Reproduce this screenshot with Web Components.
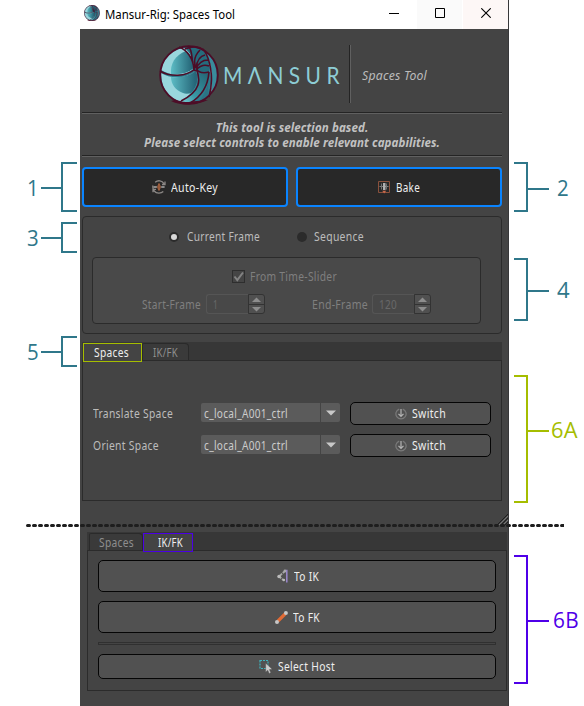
<!DOCTYPE html>
<html lang="en">
<head>
<meta charset="utf-8">
<title>Mansur-Rig: Spaces Tool</title>
<style>
html,body{margin:0;background:#fff}
body{width:584px;height:706px;overflow:hidden;font:12px "Noto Sans","Open Sans",sans-serif}
</style>
</head>
<body>
<spaces-page></spaces-page>
<script>
const define = (name, html, setup) => customElements.define(name, class extends HTMLElement {
  connectedCallback() {
    if (this.shadowRoot) return;
    const root = this.attachShadow({mode: 'open'});
    const t = document.createElement('template');
    t.innerHTML = html;
    root.append(t.content.cloneNode(true));
    if (setup) setup(this, root);
  }
});

/* Label condensed or expanded to the width in "w". */
define('fit-label', `<style>:host{display:block;flex:none;white-space:nowrap;line-height:16px;height:16px;letter-spacing:.35px}span{display:inline-block;transform-origin:0 50%}</style><span><slot></slot></span>`,
(el, root) => {
  const s = root.querySelector('span'), w = +el.getAttribute('w');
  el.style.width = w + 'px';
  s.style.transform = 'scaleX(' + w / s.getBoundingClientRect().width + ')';
});

/* Numbered bracket beside the window. */
define('call-out', `<style>
:host{display:flex;align-items:flex-start;color:var(--c,#2f778a);font-family:"Open Sans","Noto Sans",sans-serif;font-size:22px;height:var(--h)}
:host([right]){flex-direction:row-reverse}
.n{display:flex;flex:1;justify-content:flex-end;padding-right:2px;margin-top:calc(var(--m) - 15px)}
:host([right]) .n{justify-content:flex-start;padding:0 0 0 var(--gap,8px);margin-top:calc(var(--m) - 16px)}
.n ::slotted(*){line-height:28px!important;height:28px!important}
.l{width:20px;height:2px;background:currentColor;margin-top:calc(var(--m) - 1px)}
:host([right]) .l{width:21px}
.b{box-sizing:border-box;width:16px;height:100%;border:2px solid;border-right:0}
:host([right]) .b{width:14px;border:2px solid;border-left:0}
</style><div class="n"><slot></slot></div><div class="l"></div><div class="b"></div>`);

const icons = {
  key: `<svg width="14" height="14" viewBox="0 0 14 14" fill="none" stroke="#8c8886" stroke-width="1.3"><path d="M3.2 2.2C6-.1 10 .4 12 3.6M1 5.5C.1 9.8 3.1 13.3 7 13.2c1.7 0 3.1-.5 4.3-1.6M13 1.6v2.9H10M1 12.2V9.4h3"/><path d="M1.5 7h3.4M9.2 7h3.4" stroke="#aaa"/><path d="M7 3.5v7" stroke="#bd6c42" stroke-width="1.6"/><path d="M5.7 5.6v2.8M8.3 5.6v2.8" stroke="#87543c"/></svg>`,
  bake: `<svg width="13" height="14" viewBox="0 0 13 14" fill="none"><path d="M.5 1.5h11v11H.5z" stroke="#8b513c"/><path d="M1.5 6.5h9" stroke="#808080"/><path d="M3.5 3.5v6M8.5 3.5v6" stroke="#707070"/><path d="M5 3h2.5v7H5z" fill="#b0b0b0"/><path d="M4.2 10.8h4L6.2 13.6z" fill="#c8694b"/></svg>`,
  sw: `<svg width="12" height="12" viewBox="0 0 12 12" fill="none"><path d="M4.2 1.1A5.1 5.1 0 1 0 7.8 1.1" stroke="#7a7a7a" stroke-width="1.2"/><path d="M6 1v7M3.5 5.9 6 8.4l2.5-2.5" stroke="#b5b5b5" stroke-width="1.2"/></svg>`,
  ik: `<svg width="12" height="14" viewBox="0 0 12 14" fill="none"><path d="M8 2 2 7.5 7 11.5" stroke="#a8a8a8" stroke-width="1.8" stroke-dasharray="3 1"/><circle cx="2" cy="7.5" r="1.7" fill="#bbb"/><circle cx="8" cy="2" r="1.4" fill="#aaa"/><circle cx="6.8" cy="11" r="1.3" fill="#bbb"/><path d="M9.8.8v12.6" stroke="#9b88cc" stroke-width="1.5"/></svg>`,
  fk: `<svg width="13" height="13" viewBox="0 0 13 13"><path d="m3 10 7-7" stroke="#e06b36" stroke-width="3.2"/><circle cx="2" cy="10.9" r="2" fill="#c7c7c7"/><circle cx="10.9" cy="2" r="2" fill="#c7c7c7"/></svg>`,
  host: `<svg width="14" height="14" viewBox="0 0 14 14"><path d="M1 .5h8v8H1z" fill="none" stroke="#3fb3bd" stroke-width="1.2" stroke-dasharray="2 1"/><path d="M6.7 3.2v8.7L8.8 10.2l1.4 3.3 1.6-.7-1.4-3.2 2.8-.4z" fill="#ccc" stroke="#515151" stroke-width=".4"/></svg>`
};

define('tool-button', `<style>
:host{box-sizing:border-box;display:flex;align-items:center;justify-content:center;gap:5px;background:#515151;border:1px solid #050505;border-radius:5px;color:#eee}
:host([big]){background:#282828;border:2px solid #0a84ff;border-radius:4px;height:40px;flex:1}
i{display:flex;flex:none}::slotted(*){position:relative;top:1px}
</style><i></i><slot></slot>`, (el, root) => root.querySelector('i').innerHTML = icons[el.getAttribute('icon')]);

define('radio-mark', `<style>:host{display:block;box-sizing:border-box;flex:none;width:10px;height:10px;border-radius:50%;background:#2b2b2b;margin-top:-1px}:host([on]){background:#d8d8d8;border:2px solid #2b2b2b}</style>`);

define('check-mark', `<style>:host{display:block;flex:none;box-sizing:border-box;width:13px;height:13px;border:1px solid #2e2e2e;background:#454545;margin-top:-1px}svg{display:block}</style>
<svg width="11" height="11"><path d="M1.5 5.5 4.3 9 10 1.5" fill="none" stroke="#838383" stroke-width="2"/></svg>`);

define('spin-box', `<style>
:host{display:flex;box-sizing:border-box;flex:none;width:59px;height:20px;border-radius:3px;color:#696969}
.v{box-sizing:border-box;width:42px;border:1px solid #555;border-right:0;border-radius:3px 0 0 3px;padding:2px 0 0 6px;background:#484848}
.s{box-sizing:border-box;width:17px;border:1px solid #333;border-radius:0 3px 3px 0;display:grid;grid-template-rows:1fr 1fr;background:#505050}
.s div{display:flex;align-items:center;justify-content:center}.s div+div{border-top:1px solid #333}
svg{display:block}
</style><div class="v"><slot></slot></div><div class="s"><div><svg width="9" height="5"><path d="m0 5 4.5-4.5L9 5z" fill="#8e8e8e"/></svg></div><div><svg width="9" height="5"><path d="m0 0 4.5 4.5L9 0z" fill="#8e8e8e"/></svg></div></div>`);

define('combo-box', `<style>
:host{display:flex;box-sizing:border-box;width:139px;height:19px;color:#ccc}
.v{flex:1;background:#5b5b5b;border-radius:2px 0 0 2px;border-right:1px solid #444;padding:3px 0 0 3px}
.a{width:19px;background:#5b5b5b;display:flex;align-items:center;justify-content:center;border-radius:0 2px 2px 0}
</style><div class="v"><slot></slot></div><div class="a"><svg width="10" height="6"><path d="M0 .5h10L5 5.5z" fill="#c8c8c8"/></svg></div>`);

define('space-row', `<style>
:host{display:grid;grid-template-columns:108px 139px 141px;height:23px;align-items:center;color:#bcbcbc}
combo-box{margin-top:-2px}tool-button{height:23px;margin-left:10px;width:141px}
tool-button fit-label{top:0}
</style><slot></slot><combo-box><fit-label w="84">c_local_A001_ctrl</fit-label></combo-box><tool-button icon="sw"><fit-label w="34">Switch</fit-label></tool-button>`);

/* Tab strip with its framed pane. */
define('tab-pane', `<style>
:host{display:block;box-sizing:border-box;width:420px}
.bar{display:flex;box-sizing:border-box;height:18px;background:#373737}
.pane{box-sizing:border-box;border:1px solid #2b2b2b;height:var(--pane)}
</style><div class="bar"><slot name="tab"></slot></div><div class="pane"><slot></slot></div>`);
define('tab-item', `<style>
:host{box-sizing:border-box;display:flex;justify-content:center;height:17px;margin-top:1px;padding-top:1px;color:#8e8e8e;border:1px solid #2a2a2a;border-bottom:0;border-radius:2px 4px 0 0;background:#3a3a3a}
:host([active]){z-index:1;position:relative;height:19px;background:#444;color:#eee;border:1px solid var(--mark);border-radius:0}
</style><slot></slot>`);

/* Shell emblem; scales to the given size. */
define('shell-logo', `<style>:host{display:block;flex:none}svg{display:block}</style>
<svg viewBox="0 0 60 60">
<defs><linearGradient id="a" x1="0" x2="1"><stop stop-color="#5cbcc5"/><stop offset=".9" stop-color="#266779"/></linearGradient>
<linearGradient id="b" x1="0" y1="1" x2="1" y2="0"><stop stop-color="#7fd0d6"/><stop offset=".35" stop-color="#3998a6"/><stop offset="1" stop-color="#22606f"/></linearGradient></defs>
<circle cx="30" cy="30" r="28.7" fill="#2f7d8e"/>
<path d="M2 25C4 13 13 4 25 3c6 3 9 11 10 20-7 8-22 9-33 2Z" fill="#99d6dd"/>
<path d="M2 28c9 6 25 6 35-2 4 8 2 20-14 31C10 54 2 44 2 28Z" fill="#99d6dd"/>
<path d="M27 6C16 10 11 19 12 29c9 1 17-1 23-6-1-7-3-13-8-17Z" fill="url(#a)"/>
<path d="M12 32c10 1 18-1 25-6 3 7 2 15-4 22-4 1-7 1-9 0C16 45 12 39 12 32Z" fill="url(#a)"/>
<path d="M25 2C37 0 47 4 50 18v9c-5 1-9 0-13-3-2-9-5-17-12-22Z" fill="#256c7d"/>
<path d="M38 26c4 3 8 3 12 1 0 13-7 25-19 31-4 0-7-1-9-2 14-9 18-17 16-30Z" fill="url(#b)"/>
<path d="M46 6c12 9 17 32 4 46 4-16 3-32-4-46Z" fill="#3a8b9c"/>
<path d="M48 10c5 10 6 25 4 38 0-10 1-23-4-38Z" fill="#c6edf0"/>
<path d="M50 28c0 11-3 20-10 28 5-1 8-3 10-5-2-8 0-15 0-23Z" fill="#2b7385"/>
<circle cx="30" cy="30" r="28.8" fill="none" stroke="#4d0d27" stroke-width="1.9"/>
<path d="M12 56c6-2 9 1 15 1s15-2 22-2c-8 4-27 7-37 1Z" fill="#4d0d27"/>
<g fill="none" stroke="#4d0d27" stroke-width="1.6"><path d="M1 26c10 6 26 6 35-2M20 2c8 3 14 11 15 22M29 1c6 5 2 14 7 23M26 4c7-3 14-3 20 2M37 23c-3-7-1-13 4-18M37 23c1-7 4-12 9-13M37 24c2-5 6-9 12-9M38 24c3-3 7-5 12-3M37 24c3 4 9 4 13 3M37 23c5 12 5 23-15 33M50 27c-1 14-7 24-19 31M44 4c8 10 11 31 6 48"/><circle cx="36.5" cy="24" r="1.6" fill="#256c7d"/></g>
</svg>`, (el, root) => {const s = root.querySelector('svg'); s.setAttribute('width', el.getAttribute('size')); s.setAttribute('height', el.getAttribute('size'));});

define('title-bar', `<style>
:host{display:flex;align-items:center;box-sizing:border-box;height:29px;background:#fff;color:#000;padding-left:4px;margin-right:-1px;border-right:1px solid #38383a}
fit-label{margin:0 auto 0 5px;letter-spacing:0}shell-logo{margin-top:-3px}
div{height:29px;display:flex;align-items:center;justify-content:center}svg{margin-top:-3px}
</style><shell-logo size="16"></shell-logo><fit-label w="130">Mansur-Rig: Spaces Tool</fit-label>
<div style="width:46px"><svg width="10" height="10"><path d="M0 5.5h10" stroke="#000"/></svg></div>
<div style="width:45px;background:#fafafa"><svg width="10" height="10"><path d="M.5.5h9v9h-9z" fill="none" stroke="#000"/></svg></div>
<div style="width:45px;margin-left:1px;background:#fdf7f6"><svg width="10" height="10"><path d="m.3.3 9.4 9.4m0-9.4L.3 9.7" stroke="#000" stroke-width="1.1"/></svg></div>`);

define('brand-header', `<style>
:host{display:flex;box-sizing:border-box;height:83px;padding:16px 0 0 79px;color:#bbb}
.w{font:23px Lato,sans-serif;line-height:28px;height:28px;color:#8dcdd5;letter-spacing:6px;margin:16px 0 0 4px}
.v{width:1px;height:58px;background:#242424;border-right:1px solid #606060;margin:0 0 0 4px}
.s{font-style:italic;margin:23px 0 0 11px;letter-spacing:.2px}
</style><shell-logo size="60"></shell-logo><fit-label class="w" w="122">MΛNSUR</fit-label><div class="v"></div><fit-label class="s" w="65">Spaces Tool</fit-label>`);

define('frame-options', `<style>
:host{display:block;box-sizing:border-box;height:118px;border:1px solid #2b2b2b;border-radius:4px;padding:12px 0 0 86px;color:#bcbcbc}
.r{display:flex;align-items:center;height:16px}
.g{box-sizing:border-box;width:389px;height:67px;margin:12px 0 0 -77px;border:1px solid #2b2b2b;border-radius:4px;background:#494949;color:#7f7f7f;padding:11px 0 0 49px}
.c{display:flex;align-items:center;gap:5px;padding-left:90px;height:16px}
.f{display:flex;align-items:center;height:20px;margin-top:9px;gap:5px}
.f>fit-label{margin-top:2px}
</style><div class="r"><radio-mark on></radio-mark><fit-label w="73" style="margin:0 37px 0 8px">Current Frame</fit-label><radio-mark></radio-mark><fit-label w="50" style="margin:0 0 0 7px">Sequence</fit-label></div>
<div class="g"><div class="c"><check-mark></check-mark><fit-label w="87">From Time-Slider</fit-label></div>
<div class="f"><fit-label w="59">Start-Frame</fit-label><spin-box><fit-label w="5">1</fit-label></spin-box><fit-label w="56" style="margin-left:42px">End-Frame</fit-label><spin-box style="margin-left:-1px"><fit-label w="18">120</fit-label></spin-box></div></div>`);

define('tool-window', `<style>
:host{display:block;box-sizing:border-box;width:429px;height:706px;background:#444;border-right:1px solid #38383a}
hr{height:1px;border:0;background:#242424;border-bottom:1px solid #606060;margin:0 6px 0 2px}
.note{height:41px;box-sizing:border-box;padding:6px 0 0 64px;color:#c2c2c2;font-weight:700;font-style:italic}
.note fit-label{line-height:15px;height:30px;text-align:center;letter-spacing:.1px}
.big{display:flex;gap:8px;margin:10px 6px 9px 2px}
frame-options{margin:0 6px 8px 2px}
.one{margin-left:2px;--pane:141px}.rows{display:grid;gap:9px;padding:41px 0 0 10px}
.two{margin-left:7px;--pane:141px}
.grip{display:flex;justify-content:flex-end;align-items:flex-end;height:31px;box-sizing:border-box;padding-bottom:6px}
.stack{display:flex;flex-direction:column;padding:9px 10px 0}
.stack tool-button{height:32px;margin-bottom:9px}
.sep{box-sizing:border-box;height:3px;border:1px solid #303030;margin-bottom:9px}
.stack .sel{height:25px;margin:0}.sel fit-label{top:0}
</style>
<title-bar></title-bar><brand-header></brand-header><hr>
<div class="note"><fit-label w="296">This tool is selection based.<br>Please select controls to enable relevant capabilities.</fit-label></div><hr>
<div class="big"><tool-button big icon="key"><fit-label w="47">Auto-Key</fit-label></tool-button><tool-button big icon="bake"><fit-label w="24">Bake</fit-label></tool-button></div>
<frame-options></frame-options>
<tab-pane class="one"><tab-item slot="tab" active style="--mark:#a5bd00;width:59px;margin-left:1px"><fit-label w="35" style="margin-left:-2px">Spaces</fit-label></tab-item><tab-item slot="tab" style="width:47px"><fit-label w="25">IK/FK</fit-label></tab-item>
<div class="rows"><space-row><fit-label w="80">Translate Space</fit-label></space-row><space-row><fit-label w="66">Orient Space</fit-label></space-row></div></tab-pane>
<div class="grip"><svg width="13" height="13"><path d="M1 13 13 1M5 13l8-8M9 13l4-4" stroke="#1e1e1e"/><path d="M3 13 13 3M7 13l6-6" stroke="#777"/></svg></div>
<tab-pane class="two"><tab-item slot="tab" style="width:54px;margin-left:2px"><fit-label w="35">Spaces</fit-label></tab-item><tab-item slot="tab" active style="--mark:#4b00e6;width:50px"><fit-label w="25" style="margin-left:5px">IK/FK</fit-label></tab-item>
<div class="stack"><tool-button icon="ik"><fit-label w="25" style="margin-right:-2px">To IK</fit-label></tool-button><tool-button icon="fk"><fit-label w="27">To FK</fit-label></tool-button><div class="sep"></div><tool-button class="sel" icon="host"><fit-label w="57">Select Host</fit-label></tool-button></div></tab-pane>`);

define('spaces-page', `<style>
:host{display:grid;grid-template-columns:80px 429px 75px;height:706px;position:relative}
.left{padding:162px 3px 0 20px}.right{padding:162px 0 0 5px}
.cut{position:absolute;left:26px;top:523px}
</style>
<div class="left"><call-out style="--h:50px;--m:26px"><fit-label w="12">1</fit-label></call-out>
<call-out style="--h:31px;--m:16px;margin-top:10px"><fit-label w="12">3</fit-label></call-out>
<call-out style="--h:31px;--m:16px;margin-top:83px"><fit-label w="12">5</fit-label></call-out></div>
<tool-window></tool-window>
<div class="right"><call-out right style="--h:50px;--m:27px"><fit-label w="12">2</fit-label></call-out>
<call-out right style="--h:63px;--m:33px;margin-top:46px"><fit-label w="13">4</fit-label></call-out>
<call-out right style="--c:#a5bd00;--h:128px;--m:56px;--gap:2px;margin-top:54px"><fit-label w="27">6A</fit-label></call-out>
<call-out right style="--c:#4f00e8;--h:129px;--m:66px;--gap:4px;margin-top:52px"><fit-label w="26">6B</fit-label></call-out></div>
<svg class="cut" width="538" height="5"><path d="M1.5 2.5h536" stroke="#1e1e1e" stroke-width="3" stroke-linecap="round" stroke-dasharray="2 4"/></svg>`);
</script>
</body>
</html>
